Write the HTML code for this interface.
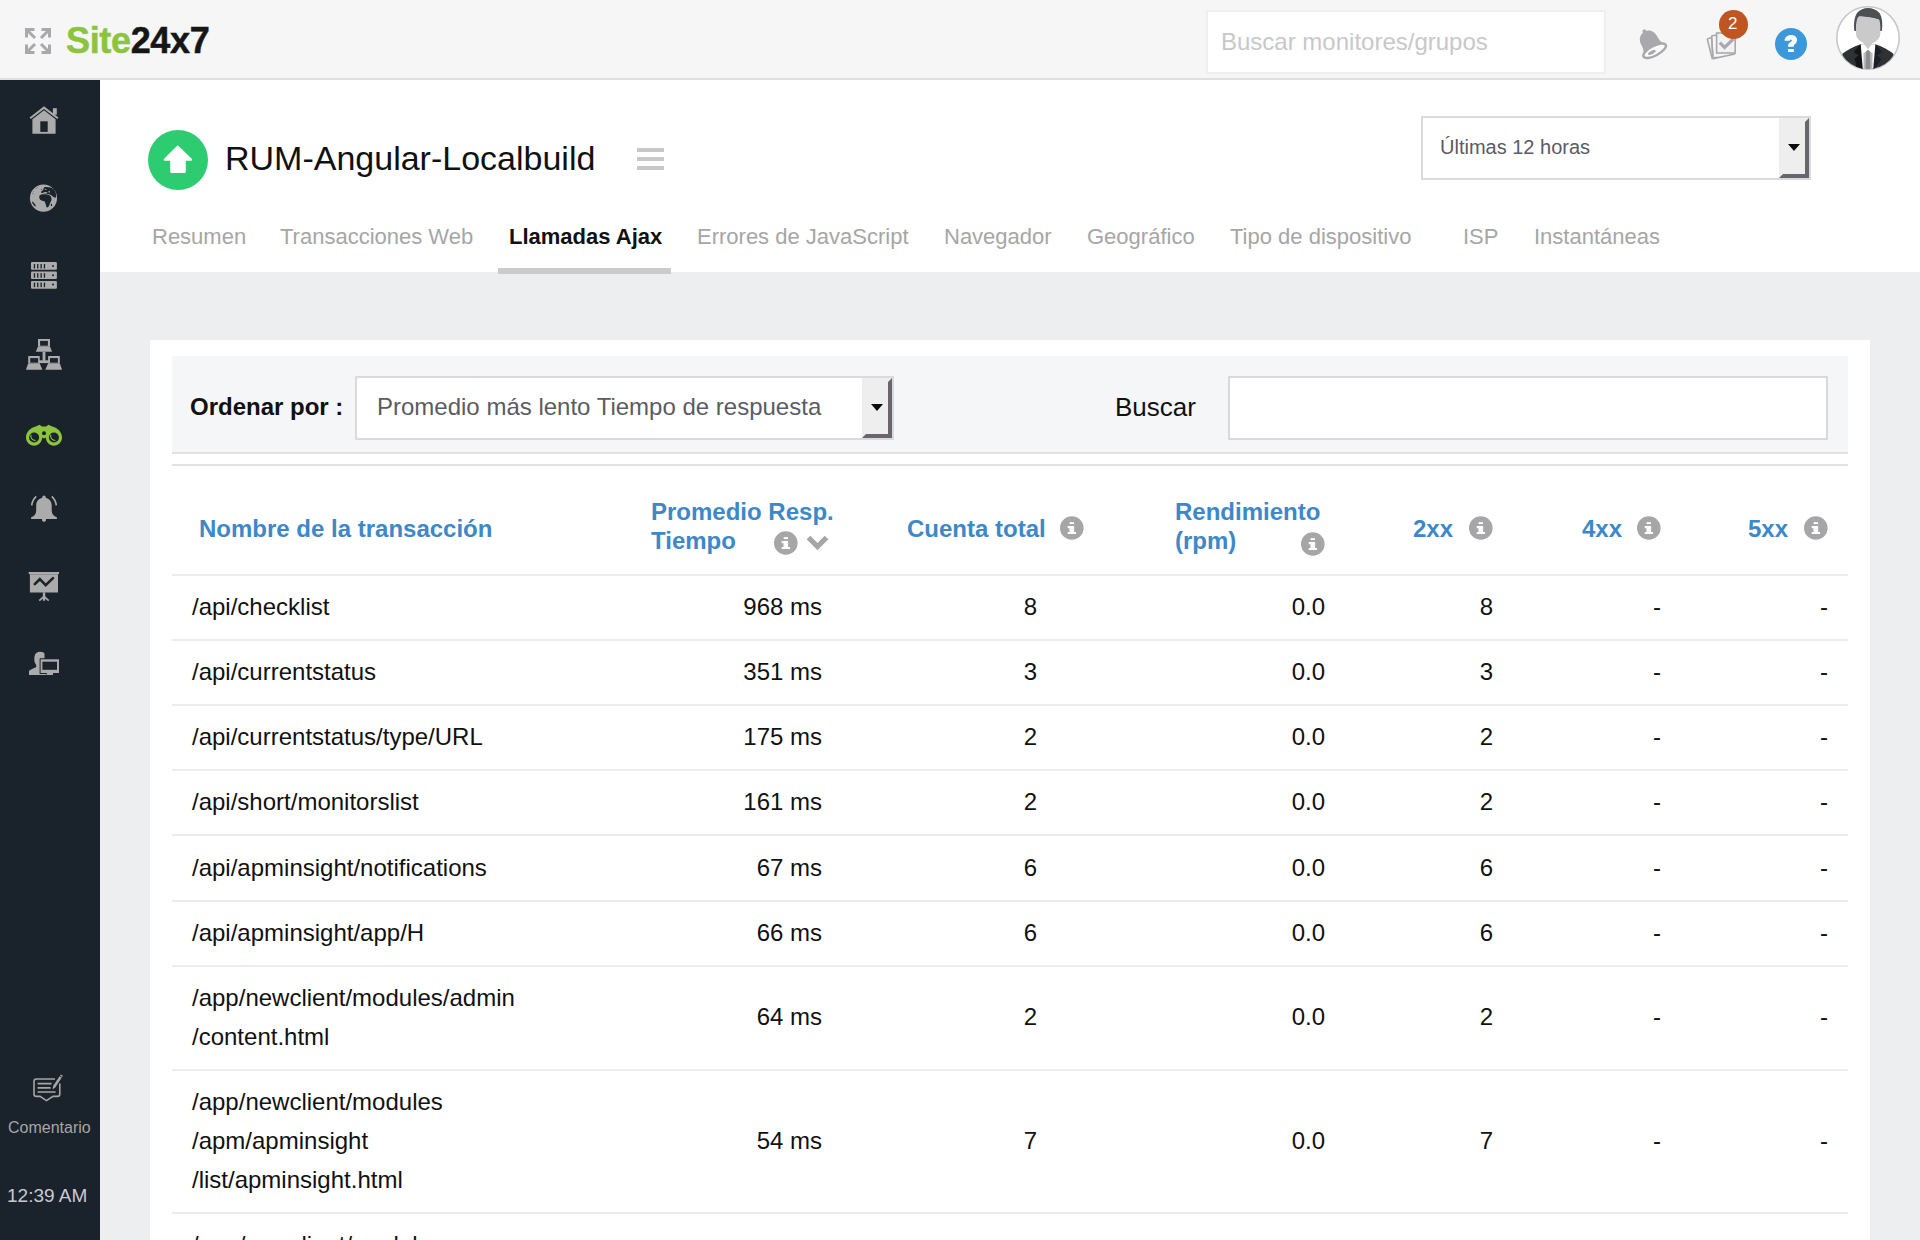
<!DOCTYPE html>
<html><head><meta charset="utf-8">
<style>
html,body{margin:0;padding:0;}
body{width:1920px;height:1240px;overflow:hidden;position:relative;background:#edeef0;font-family:"Liberation Sans",sans-serif;}
.a{position:absolute;}
.t{position:absolute;white-space:nowrap;line-height:20px;}
.r{text-align:right;}
#hdr{left:0;top:0;width:1920px;height:78px;background:#f6f6f6;border-bottom:2px solid #dfdfdf;}
#side{left:0;top:80px;width:100px;height:1160px;background:#1a232b;}
#chead{left:100px;top:80px;width:1820px;height:192px;background:#fff;}
#card{left:150px;top:340px;width:1720px;height:900px;background:#fff;}
#fbar{left:172px;top:356px;width:1676px;height:96px;background:#f5f6f8;border-bottom:2px solid #e2e2e2;}
.ln{position:absolute;left:172px;width:1676px;height:2px;background:#ececec;}
.sel{position:absolute;box-sizing:border-box;border:2px solid #dadada;background:#fff;}
.abtn{position:absolute;box-sizing:border-box;width:30px;height:60px;background:#efeeef;border:4px solid;border-color:#efeeef #68666c #68666c #efeeef;}
.tri{position:absolute;width:0;height:0;border-left:6.5px solid transparent;border-right:6.5px solid transparent;border-top:7px solid #0a0a0a;}
.tab{font-size:22px;color:#a6a6a6;}
.th{font-size:24px;font-weight:700;color:#3d88c8;}
.td{font-size:24px;color:#111;}
</style></head><body>

<!-- header -->
<div id="hdr" class="a"></div>
<div id="side" class="a"></div>
<div id="chead" class="a"></div>
<div id="card" class="a"></div>

<!-- logo -->
<div class="t" style="left:66px;top:31px;font-size:36px;font-weight:700;-webkit-text-stroke:0.5px;letter-spacing:-0.35px;"><span style="color:#8cc43f;-webkit-text-stroke-color:#8cc43f">Site</span><span style="color:#161616;-webkit-text-stroke-color:#161616">24x7</span></div>

<!-- header search -->
<div class="sel" style="left:1206px;top:10px;width:400px;height:64px;border-color:#efefef;"></div>
<div class="t" style="left:1221px;top:32px;font-size:24px;color:#c8c8c8;">Buscar monitores/grupos</div>

<!-- content header -->
<div class="a" style="left:148px;top:130px;width:60px;height:60px;border-radius:50%;background:#2ecc71;"></div>
<div class="t" style="left:225px;top:148px;font-size:34px;color:#111;">RUM-Angular-Localbuild</div>
<div class="a" style="left:637px;top:148px;width:27px;height:4px;background:#c8c8c8;"></div>
<div class="a" style="left:637px;top:157px;width:27px;height:4px;background:#c8c8c8;"></div>
<div class="a" style="left:637px;top:166px;width:27px;height:4px;background:#c8c8c8;"></div>

<div class="sel" style="left:1421px;top:116px;width:390px;height:64px;"></div>
<div class="t" style="left:1440px;top:137px;font-size:20px;color:#5b5b63;">Últimas 12 horas</div>
<div class="abtn" style="left:1779px;top:118px;"></div>
<div class="tri" style="left:1788px;top:144px;"></div>

<!-- tabs -->
<div class="t tab" style="left:152px;top:227px;">Resumen</div>
<div class="t tab" style="left:280px;top:227px;">Transacciones Web</div>
<div class="t tab" style="left:509px;top:227px;font-weight:700;color:#111;">Llamadas Ajax</div>
<div class="t tab" style="left:697px;top:227px;">Errores de JavaScript</div>
<div class="t tab" style="left:944px;top:227px;">Navegador</div>
<div class="t tab" style="left:1087px;top:227px;">Geográfico</div>
<div class="t tab" style="left:1230px;top:227px;">Tipo de dispositivo</div>
<div class="t tab" style="left:1463px;top:227px;">ISP</div>
<div class="t tab" style="left:1534px;top:227px;">Instantáneas</div>
<div class="a" style="left:498px;top:268px;width:173px;height:6px;background:#cbcbcb;"></div>

<!-- filter bar -->
<div id="fbar" class="a"></div>
<div class="t" style="left:190px;top:397px;font-size:24px;font-weight:700;color:#111;">Ordenar por :</div>
<div class="sel" style="left:355px;top:376px;width:539px;height:64px;"></div>
<div class="t" style="left:377px;top:397px;font-size:24px;color:#5b5b63;">Promedio más lento Tiempo de respuesta</div>
<div class="abtn" style="left:862px;top:378px;"></div>
<div class="tri" style="left:871px;top:404px;"></div>
<div class="t" style="left:1115px;top:397px;font-size:26px;color:#111;">Buscar</div>
<div class="sel" style="left:1228px;top:376px;width:600px;height:64px;border-color:#d9d9d9;"></div>

<!-- table lines -->
<div class="ln" style="top:464px;background:#e2e2e2;"></div>
<div class="ln" style="top:574px;"></div>
<div class="ln" style="top:639px;"></div>
<div class="ln" style="top:704px;"></div>
<div class="ln" style="top:769px;"></div>
<div class="ln" style="top:834px;"></div>
<div class="ln" style="top:900px;"></div>
<div class="ln" style="top:965px;"></div>
<div class="ln" style="top:1069px;"></div>
<div class="ln" style="top:1212px;"></div>

<!-- table header -->
<div class="t th" style="left:199px;top:519px;">Nombre de la transacción</div>
<div class="t th" style="left:651px;top:502px;">Promedio Resp.</div>
<div class="t th" style="left:651px;top:531px;">Tiempo</div>
<div class="t th" style="left:907px;top:519px;">Cuenta total</div>
<div class="t th" style="left:1175px;top:502px;">Rendimiento</div>
<div class="t th" style="left:1175px;top:531px;">(rpm)</div>
<div class="t th" style="left:1413px;top:519px;">2xx</div>
<div class="t th" style="left:1582px;top:519px;">4xx</div>
<div class="t th" style="left:1748px;top:519px;">5xx</div>

<!--ICONS-->
<svg width="0" height="0" style="position:absolute"><defs><g id="info"><circle cx="11.8" cy="12" r="11.8" fill="#a6a6a8"/><rect x="9.7" y="6.1" width="4.3" height="2" fill="#fff"/><path d="M7.7 10.1H14.1V16.1H16V18.1H7.7V16.1H9.5V12.3H7.7Z" fill="#fff"/></g></defs></svg>
<!-- expand icon -->
<svg class="a" style="left:25px;top:28px" width="26" height="26" viewBox="0 0 26 26" fill="none" stroke="#a9a9ad" stroke-width="3">
<path d="M1.5 9.5V1.5H9.5M2.5 2.5L10 10"/>
<path d="M16.5 1.5H24.5V9.5M23.5 2.5L16 10"/>
<path d="M1.5 16.5V24.5H9.5M2.5 23.5L10 16"/>
<path d="M24.5 16.5V24.5H16.5M23.5 23.5L16 16"/>
</svg>

<!-- header bell -->
<svg class="a" style="left:1630px;top:20px" width="50" height="45" viewBox="0 0 50 45">
<g transform="translate(20.5 23) rotate(-28)" fill="#a9a9ad">
<circle cx="0" cy="-13.2" r="1.9"/>
<path d="M0 -12.8C-6 -12.8 -9 -8 -9 -2.5C-9 2.5 -10 5 -12.5 8.5L12.5 8.5C10 5 9 2.5 9 -2.5C9 -8 6 -12.8 0 -12.8Z"/>
<ellipse cx="0" cy="8.8" rx="12.6" ry="4.8" fill="#fafafa" stroke="#a9a9ad" stroke-width="2.4"/>
<ellipse cx="-3.2" cy="9" rx="4.2" ry="1.7"/>
</g>
</svg>

<!-- tasks icon -->
<svg class="a" style="left:1700px;top:5px" width="55" height="60" viewBox="0 0 55 60" fill="none" stroke="#a9a9ad" stroke-width="1.6">
<path d="M7.2 33.8L11.6 32.8L13 53.2L17 52.4" />
<path d="M12.4 54.2L7.2 33.8"/>
<path d="M11.4 30.8L16 30.2M11.6 31L12.8 51.8"/>
<path d="M13 53.6L35 49"/>
<rect x="16.6" y="28" width="18.6" height="20" fill="#f2f2f3"/>
<path d="M19.8 37.6L24.6 42.4L33.4 33.8" stroke-width="3.2"/>
</svg>
<div class="a" style="left:1718.5px;top:10px;width:29.5px;height:29px;border-radius:50%;background:#bf5521;"></div>
<div class="t" style="left:1728px;top:14px;font-size:17px;color:#fff;width:14px;">2</div>

<!-- question icon -->
<svg class="a" style="left:1775px;top:28px" width="32" height="32" viewBox="0 0 32 32">
<circle cx="16" cy="16" r="16" fill="#3a98db"/>
<path fill="#fff" d="M9.6 12.8C9.6 9.2 12.4 7 16.2 7C19.8 7 22 9.2 22 12C22 14.6 20.4 15.8 19.2 16.8C18.8 17.2 18.8 17.8 18.8 18.8L13 18.8C13 16.2 13.6 15.2 15.4 14C16.4 13.3 16.8 13 16.8 12.4C16.8 11.8 16.4 11.5 15.8 11.5C15.1 11.5 14.8 12.1 14.8 12.8Z"/>
<rect x="13" y="21" width="5.8" height="3" fill="#fff"/>
</svg>

<!-- avatar -->
<svg class="a" style="left:1836px;top:6px" width="64" height="64" viewBox="0 0 64 64">
<defs><clipPath id="avc"><circle cx="32" cy="32" r="31"/></clipPath></defs>
<circle cx="32" cy="32" r="31.2" fill="#fff" stroke="#c8c8c8" stroke-width="1.6"/>
<g clip-path="url(#avc)">
<path d="M18.4 25C17.6 19 18 12 21 7C24 3.5 28 2 32 2C36 2 40.5 3.5 43.5 7C46.5 12 46.8 19 45.8 25L44 25L43 14C39 12.5 33 11 23 10.5L20.2 25Z" fill="#4b5054"/>
<path d="M20 19C20.5 14 21.5 11 23 10.5C29 10.3 35 11 43 13.5C44 15.5 44.3 18 44.3 21L44.3 27C44.3 32 41 35.5 37 37L34.5 36.5L27 36.5C23 35 20 32 20 27Z" fill="#cacaca"/>
<path d="M37 36.5C35 37.3 33.5 37.6 32 37.6C30.5 37.6 29 37.3 27 36.5" fill="none" stroke="#b0b0b0" stroke-width="0.8"/>
<path d="M6.6 47.4C12 43.5 18 40.5 24.7 38.2L39.4 38.2C46 40.5 52 43.5 57.2 47.4L60 70L4 70Z" fill="#2f3234"/>
<path d="M24.7 38.2L17.9 46.1L22.8 49.2L18.5 52.9L27.7 66L29 70L24 70L20 60Z" fill="#121416"/>
<path d="M24.7 38.2L27.7 66L20 58L18.5 52.9L22.8 49.2L17.9 46.1Z" fill="#121416"/>
<path d="M39.3 38.2L46.1 46.1L41.2 49.2L45.5 52.9L36.3 66Z" fill="#18212a"/>
<path d="M24.7 38.2L39.4 38.2L36.6 70L27.4 70Z" fill="#ffffff"/>
<path d="M25.3 33.9L38.2 33.9L32 43.5Z" fill="#cacaca"/>
<path d="M27.4 47.4L32 43.8L36.6 47.4L36.2 70L27.8 70Z" fill="#b9b9c1"/>
<path d="M30.2 45.2L32 44L33.8 45.2L34.8 70L29.2 70Z" fill="#8e8e8e"/>
</g>
</svg>

<!-- sidebar: home -->
<svg class="a" style="left:25px;top:100px" width="40" height="40" viewBox="0 0 40 40" fill="#ababab">
<path d="M5.2 18.2L19 7.6L32.8 18.2" fill="none" stroke="#ababab" stroke-width="2"/>
<rect x="27.9" y="8.2" width="3.9" height="6.5"/>
<path d="M7.4 19.2L19 10.2L30.6 19.2L30.6 33.8L7.4 33.8Z"/>
<rect x="15.3" y="21.3" width="7.4" height="10.6" fill="#1b232c"/>
</svg>

<!-- globe -->
<svg class="a" style="left:25px;top:180px" width="40" height="40" viewBox="0 0 1240 1240">
<circle cx="573" cy="562" r="420" fill="#ababab"/>
<g fill="#1b232c">
<path d="M600 225C700 205 830 235 890 290C950 350 975 440 962 545L905 545C865 520 835 495 805 468C770 445 710 438 660 430C610 408 565 395 505 392C485 362 520 330 560 318C565 280 580 250 600 225Z"/>
<path d="M452 478C485 440 560 432 640 442C720 452 778 470 800 512C822 560 832 600 812 640C782 700 762 760 722 840C702 862 672 862 662 830C642 760 632 700 602 662C562 642 502 642 472 612C442 572 432 522 452 478Z"/>
<path d="M228 655C280 700 332 760 342 822C302 822 262 762 222 702Z"/>
<ellipse cx="820" cy="772" rx="20" ry="38"/>
<circle cx="245" cy="425" r="14"/><circle cx="262" cy="365" r="12"/><circle cx="345" cy="265" r="12"/><circle cx="395" cy="232" r="10"/><circle cx="510" cy="295" r="14"/>
</g>
<g fill="#ababab"><ellipse cx="640" cy="290" rx="28" ry="16"/><ellipse cx="750" cy="365" rx="24" ry="30"/><ellipse cx="630" cy="395" rx="70" ry="22"/></g>
</svg>

<!-- server -->
<svg class="a" style="left:25px;top:255px" width="40" height="40" viewBox="0 0 40 40" fill="#ababab">
<rect x="6" y="7.1" width="25.9" height="7.7" rx="1"/>
<rect x="6" y="16.5" width="25.9" height="7.5" rx="1"/>
<rect x="6" y="26" width="25.9" height="7.7" rx="1"/>
<g fill="#1b232c">
<rect x="8.8" y="9" width="1.3" height="4.5"/><rect x="12.1" y="9" width="1.3" height="4.5"/><rect x="15.5" y="9" width="1.3" height="4.5"/><rect x="18.8" y="9" width="1.3" height="4.5"/><circle cx="28" cy="11" r="1"/>
<rect x="8.8" y="18.2" width="1.3" height="4.5"/><rect x="12.1" y="18.2" width="1.3" height="4.5"/><rect x="15.5" y="18.2" width="1.3" height="4.5"/><rect x="18.8" y="18.2" width="1.3" height="4.5"/><circle cx="28" cy="20.2" r="1"/>
<rect x="8.8" y="27.6" width="1.3" height="4.5"/><rect x="12.1" y="27.6" width="1.3" height="4.5"/><rect x="15.5" y="27.6" width="1.3" height="4.5"/><rect x="18.8" y="27.6" width="1.3" height="4.5"/><circle cx="28" cy="29.6" r="1"/>
</g>
</svg>

<!-- network -->
<svg class="a" style="left:22px;top:334px" width="44" height="44" viewBox="0 0 44 44" fill="#ababab">
<rect x="16" y="5" width="12" height="7.6"/>
<rect x="18.1" y="6.9" width="7.8" height="4.8" fill="#1b232c"/>
<path d="M16 12.4L28 12.4L30 17.8L13.8 17.8Z"/>
<rect x="20.6" y="17.8" width="2.8" height="9"/>
<rect x="17" y="26.3" width="10" height="2.8"/>
<rect x="6.2" y="22" width="11.5" height="7.6"/>
<rect x="8.2" y="24.1" width="7.9" height="4.6" fill="#1b232c"/>
<path d="M6.2 29.5L17.7 29.5L20.4 35.7L3.9 35.7Z"/>
<rect x="26.1" y="22" width="11.7" height="7.6"/>
<rect x="28" y="24.1" width="7.9" height="4.6" fill="#1b232c"/>
<path d="M26.1 29.5L37.8 29.5L40.1 35.7L23.2 35.7Z"/>
</svg>

<!-- binoculars -->
<svg class="a" style="left:22px;top:413px" width="44" height="44" viewBox="0 0 44 44" fill="#8cc43f">
<path d="M4 24.5C4 20 7 16.5 11 14.5L15 13L17.4 11.7L20 13.5L24 13.5L26.6 11.7L29 13L33 14.5C37 16.5 40 20 40 24.5C40 29 36.4 32.7 31.9 32.7C27.4 32.7 23.8 29 23.8 24.6L22 25.5L20.2 24.6C20.2 29 16.6 32.7 12.1 32.7C7.6 32.7 4 29 4 24.5Z"/>
<circle cx="12.1" cy="24.5" r="5" fill="#1b232c"/>
<circle cx="31.9" cy="24.5" r="5" fill="#1b232c"/>
<circle cx="22" cy="20.2" r="2" fill="#1b232c"/>
<path d="M8.8 21.8C8.6 25 10 27.3 13.6 27.5" fill="none" stroke="#8cc43f" stroke-width="1.1"/>
<path d="M28.6 21.8C28.4 25 29.8 27.3 33.4 27.5" fill="none" stroke="#8cc43f" stroke-width="1.1"/>
</svg>

<!-- bell -->
<svg class="a" style="left:23px;top:488px" width="40" height="40" viewBox="0 0 40 40" fill="#ababab">
<circle cx="21" cy="9.2" r="1.7"/>
<path d="M21 9.8C16.5 9.8 13.2 12.8 13.2 17.5L13.2 22.5C13.2 26 11.5 28 8.1 29.2L8.1 31L33.9 31L33.9 29.2C30.5 28 28.7 26 28.7 22.5L28.7 17.5C28.7 12.8 25.5 9.8 21 9.8Z"/>
<path d="M19 31L23 31L23 32C23 33.2 22 33.8 21 33.8C20 33.8 19 33.2 19 32Z"/>
<path d="M13.2 8.4C10.8 10.8 9 14 8.7 17.4" fill="none" stroke="#ababab" stroke-width="1.6"/>
<path d="M28.8 8.4C31.2 10.8 33 14 33.3 17.4" fill="none" stroke="#ababab" stroke-width="1.6"/>
</svg>

<!-- presentation -->
<svg class="a" style="left:23px;top:566px" width="40" height="40" viewBox="0 0 40 40" fill="#ababab">
<path d="M5.6 6L36.1 6L36.1 7.4L35 8.5L6.9 8.5L5.6 7.4Z"/>
<rect x="6.9" y="8.4" width="28.1" height="18.1"/>
<path d="M11.8 18.1L16.8 13.2L22.7 19.2L30 12.1" fill="none" stroke="#1b232c" stroke-width="2.6" stroke-linecap="round" stroke-linejoin="miter"/>
<rect x="19.9" y="26.4" width="2.3" height="8.3"/>
<path d="M21 30.4L16.3 34.7M21 30.4L25.7 34.7" stroke="#ababab" stroke-width="1.6"/>
</svg>

<!-- user desktop -->
<svg class="a" style="left:23px;top:643px" width="40" height="40" viewBox="0 0 40 40" fill="#ababab">
<path d="M6 28C6.5 27 9 26 12.5 24.5C13.5 24 13.6 22.5 12.6 21C11.2 19.2 11 16 11.6 13C12.3 10 14.5 8.8 17 8.8C19.5 8.8 21.5 9.5 21.5 11L21.5 15.5L17 15.5L17 31L23.5 31L23.5 32L6 32Z"/>
<rect x="16.6" y="15.5" width="20.2" height="15.5" fill="#1b232c"/>
<rect x="17.6" y="16.3" width="18.4" height="13.7"/>
<rect x="19.4" y="18.7" width="14.6" height="8.1" fill="#1b232c"/>
<rect x="23.8" y="30" width="6.2" height="2"/>
</svg>

<!-- comment -->
<svg class="a" style="left:28px;top:1068px" width="40" height="40" viewBox="0 0 40 40" fill="none" stroke="#a6a6a6" stroke-width="1.6">
<path d="M27 11L8.4 11C7 11 6 12 6 13.4L6 26C6 27.4 7 28.4 8.4 28.4L12 28.4L18.5 32.6L25 28.4L29.4 28.4C30.8 28.4 31.8 27.4 31.8 26L31.8 15.5"/>
<path d="M9.6 15.6L23.6 15.6M9.6 19.8L22.6 19.8M9.6 24L27.6 24" stroke-width="1.7"/>
<path d="M24.6 21.4L25.2 17.8L31.6 8.2L33.8 9.6L27.4 19.2Z" fill="#a6a6a6" stroke="none"/>
<path d="M32 7.6L32.8 6.4L35 7.8L34.2 9" fill="#a6a6a6" stroke="none"/>
</svg>
<div class="t" style="left:8px;top:1118px;font-size:16px;color:#a6a6a6;">Comentario</div>
<div class="t" style="left:7px;top:1186px;font-size:19px;color:#c9c9d1;">12:39 AM</div>

<!-- status up arrow -->
<svg class="a" style="left:148px;top:130px" width="60" height="60" viewBox="0 0 60 60">
<path fill="#fff" stroke="#fff" stroke-width="2.4" stroke-linejoin="round" d="M29.8 16.8L42.9 29.6L36.6 29.6L36.6 41.8L23.4 41.8L23.4 29.6L16.9 29.6Z"/>
</svg>

<!-- header info icons + chevron -->
<svg class="a" style="left:774px;top:531px" width="24" height="24" viewBox="0 0 24 24"><use href="#info"/></svg>
<svg class="a" style="left:1060px;top:516px" width="24" height="24" viewBox="0 0 24 24"><use href="#info"/></svg>
<svg class="a" style="left:1301px;top:532px" width="24" height="24" viewBox="0 0 24 24"><use href="#info"/></svg>
<svg class="a" style="left:1469px;top:516px" width="24" height="24" viewBox="0 0 24 24"><use href="#info"/></svg>
<svg class="a" style="left:1637px;top:516px" width="24" height="24" viewBox="0 0 24 24"><use href="#info"/></svg>
<svg class="a" style="left:1804px;top:516px" width="24" height="24" viewBox="0 0 24 24"><use href="#info"/></svg>
<svg class="a" style="left:804px;top:532px" width="28" height="22" viewBox="0 0 28 22">
<path d="M4.5 5.5L13.5 14.5L22.5 5.5" fill="none" stroke="#a6a6a6" stroke-width="5.2"/>
</svg>

<!--/ICONS-->

<!--ROWS-->
<div class="t td" style="left:192px;top:597px;">/api/checklist</div>
<div class="t td r" style="left:622px;width:200px;top:597px;">968 ms</div>
<div class="t td r" style="left:837px;width:200px;top:597px;">8</div>
<div class="t td r" style="left:1125px;width:200px;top:597px;">0.0</div>
<div class="t td r" style="left:1293px;width:200px;top:597px;">8</div>
<div class="t td r" style="left:1461px;width:200px;top:597px;">-</div>
<div class="t td r" style="left:1628px;width:200px;top:597px;">-</div>
<div class="t td" style="left:192px;top:662px;">/api/currentstatus</div>
<div class="t td r" style="left:622px;width:200px;top:662px;">351 ms</div>
<div class="t td r" style="left:837px;width:200px;top:662px;">3</div>
<div class="t td r" style="left:1125px;width:200px;top:662px;">0.0</div>
<div class="t td r" style="left:1293px;width:200px;top:662px;">3</div>
<div class="t td r" style="left:1461px;width:200px;top:662px;">-</div>
<div class="t td r" style="left:1628px;width:200px;top:662px;">-</div>
<div class="t td" style="left:192px;top:727px;">/api/currentstatus/type/URL</div>
<div class="t td r" style="left:622px;width:200px;top:727px;">175 ms</div>
<div class="t td r" style="left:837px;width:200px;top:727px;">2</div>
<div class="t td r" style="left:1125px;width:200px;top:727px;">0.0</div>
<div class="t td r" style="left:1293px;width:200px;top:727px;">2</div>
<div class="t td r" style="left:1461px;width:200px;top:727px;">-</div>
<div class="t td r" style="left:1628px;width:200px;top:727px;">-</div>
<div class="t td" style="left:192px;top:792px;">/api/short/monitorslist</div>
<div class="t td r" style="left:622px;width:200px;top:792px;">161 ms</div>
<div class="t td r" style="left:837px;width:200px;top:792px;">2</div>
<div class="t td r" style="left:1125px;width:200px;top:792px;">0.0</div>
<div class="t td r" style="left:1293px;width:200px;top:792px;">2</div>
<div class="t td r" style="left:1461px;width:200px;top:792px;">-</div>
<div class="t td r" style="left:1628px;width:200px;top:792px;">-</div>
<div class="t td" style="left:192px;top:858px;">/api/apminsight/notifications</div>
<div class="t td r" style="left:622px;width:200px;top:858px;">67 ms</div>
<div class="t td r" style="left:837px;width:200px;top:858px;">6</div>
<div class="t td r" style="left:1125px;width:200px;top:858px;">0.0</div>
<div class="t td r" style="left:1293px;width:200px;top:858px;">6</div>
<div class="t td r" style="left:1461px;width:200px;top:858px;">-</div>
<div class="t td r" style="left:1628px;width:200px;top:858px;">-</div>
<div class="t td" style="left:192px;top:923px;">/api/apminsight/app/H</div>
<div class="t td r" style="left:622px;width:200px;top:923px;">66 ms</div>
<div class="t td r" style="left:837px;width:200px;top:923px;">6</div>
<div class="t td r" style="left:1125px;width:200px;top:923px;">0.0</div>
<div class="t td r" style="left:1293px;width:200px;top:923px;">6</div>
<div class="t td r" style="left:1461px;width:200px;top:923px;">-</div>
<div class="t td r" style="left:1628px;width:200px;top:923px;">-</div>
<div class="t td" style="left:192px;top:988px;">/app/newclient/modules/admin</div>
<div class="t td" style="left:192px;top:1027px;">/content.html</div>
<div class="t td r" style="left:622px;width:200px;top:1007px;">64 ms</div>
<div class="t td r" style="left:837px;width:200px;top:1007px;">2</div>
<div class="t td r" style="left:1125px;width:200px;top:1007px;">0.0</div>
<div class="t td r" style="left:1293px;width:200px;top:1007px;">2</div>
<div class="t td r" style="left:1461px;width:200px;top:1007px;">-</div>
<div class="t td r" style="left:1628px;width:200px;top:1007px;">-</div>
<div class="t td" style="left:192px;top:1092px;">/app/newclient/modules</div>
<div class="t td" style="left:192px;top:1131px;">/apm/apminsight</div>
<div class="t td" style="left:192px;top:1170px;">/list/apminsight.html</div>
<div class="t td r" style="left:622px;width:200px;top:1131px;">54 ms</div>
<div class="t td r" style="left:837px;width:200px;top:1131px;">7</div>
<div class="t td r" style="left:1125px;width:200px;top:1131px;">0.0</div>
<div class="t td r" style="left:1293px;width:200px;top:1131px;">7</div>
<div class="t td r" style="left:1461px;width:200px;top:1131px;">-</div>
<div class="t td r" style="left:1628px;width:200px;top:1131px;">-</div>
<div class="t td" style="left:192px;top:1235px;">/app/newclient/modules</div>
<!--/ROWS-->
</body></html>
